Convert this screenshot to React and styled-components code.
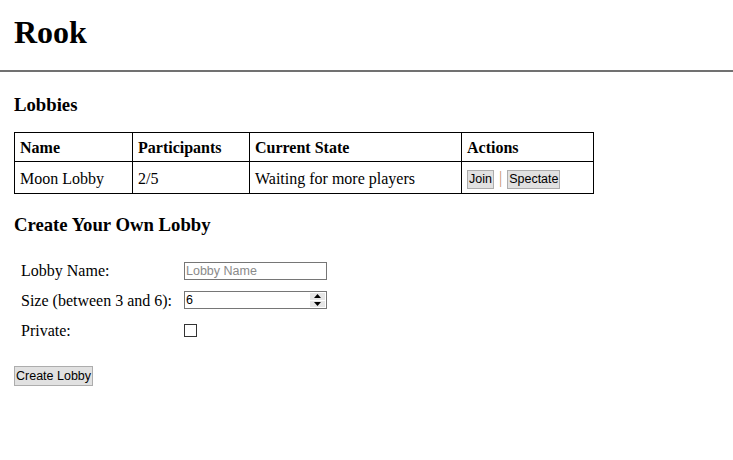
import React from "react";
import styled, { createGlobalStyle } from "styled-components";

const GlobalStyle = createGlobalStyle`
  html, body {
    margin: 0;
    padding: 0;
    background: #ffffff;
  }
  body {
    font-family: "Liberation Serif", "Times New Roman", serif;
    font-size: 16px;
    color: #000000;
  }
`;

// Header
const Header = styled.header`
  padding: 14px 14px 20px;
`;
const Title = styled.h1`
  margin: 0;
  font-size: 32px;
  line-height: 36px;
  font-weight: bold;
`;
const Rule = styled.div`
  height: 2px;
  background: #717171;
`;

const Main = styled.main`
  padding: 0 14px;
`;
const SectionTitle = styled.h3`
  margin: ${(p) => p.$top}px 0 0;
  font-size: 18.72px;
  line-height: 22px;
  font-weight: bold;
`;

// Lobby table
const Table = styled.table`
  margin-top: 16px;
  width: 579px;
  border-collapse: collapse;
  table-layout: fixed;
  font-size: 16px;
`;
const Th = styled.th`
  width: ${(p) => p.$width}px;
  border: 1px solid #000;
  padding: 6px 5px 4px;
  text-align: left;
  line-height: 18px;
  font-weight: bold;
`;
const Td = styled.td`
  border: 1px solid #000;
  padding: 6px 5px 4px;
  line-height: 18px;
  height: 21px;
  vertical-align: middle;
`;
const SmallButton = styled.button`
  font-family: "Liberation Sans", Arial, sans-serif;
  font-size: 12.5px;
  line-height: 15px;
  padding: 1px 1px;
  margin: 0;
  color: #000;
  background: #e1e1e1;
  border: 1px solid #adadad;
  border-radius: 0;
  vertical-align: baseline;
`;
const Divider = styled.span`
  color: #c4926a;
  margin: 0 1px;
`;

// Create form
const Form = styled.div`
  margin-top: 19px;
  padding-left: 7px;
  display: grid;
  grid-template-columns: 163px auto;
  grid-auto-rows: 30px;
  align-items: center;
`;
const Label = styled.span`
  line-height: 18px;
  padding-top: 2px;
`;
const TextInput = styled.input`
  box-sizing: border-box;
  width: 143px;
  height: 18px;
  margin: 0;
  padding: 0 1px;
  border: 1px solid #767676;
  font-family: "Liberation Sans", Arial, sans-serif;
  font-size: 12.5px;
  color: #000;
  outline: none;
  &::placeholder {
    color: #8a8a8a;
  }
`;
const NumberBox = styled.div`
  box-sizing: border-box;
  width: 143px;
  height: 18px;
  display: flex;
  border: 1px solid #767676;
  background: #fff;
`;
const NumberField = styled.input`
  flex: 1;
  min-width: 0;
  margin: 0;
  padding: 0 1px;
  border: none;
  font-family: "Liberation Sans", Arial, sans-serif;
  font-size: 12.5px;
  color: #000;
  outline: none;
`;
const Spinner = styled.div`
  width: 15px;
  display: flex;
  flex-direction: column;
  gap: 1px;
  padding: 1px 1px 1px 0;
`;
const SpinHalf = styled.div`
  flex: 1;
  background: #e6e6e6;
  display: flex;
  align-items: center;
  justify-content: center;
`;
const Check = styled.span`
  display: block;
  box-sizing: border-box;
  width: 13px;
  height: 13px;
  border: 1px solid #333;
  background: #fff;
`;
const CreateButton = styled(SmallButton)`
  display: block;
  margin-top: 21px;
  height: 20px;
`;

const Arrow = ({ up }) => (
  <svg width="7" height="4" viewBox="0 0 7 4">
    <path d={up ? "M0 4 L3.5 0 L7 4 Z" : "M0 0 L3.5 4 L7 0 Z"} fill="#000" />
  </svg>
);

const lobbies = [
  { name: "Moon Lobby", participants: "2/5", state: "Waiting for more players" },
];

export default function App() {
  return (
    <>
      <GlobalStyle />
      <Header>
        <Title>Rook</Title>
      </Header>
      <Rule />
      <Main>
        <SectionTitle $top={22}>Lobbies</SectionTitle>
        <Table>
          <thead>
            <tr>
              <Th $width={107}>Name</Th>
              <Th $width={106}>Participants</Th>
              <Th $width={201}>Current State</Th>
              <Th $width={121}>Actions</Th>
            </tr>
          </thead>
          <tbody>
            {lobbies.map((l, i) => (
              <tr key={i}>
                <Td>{l.name}</Td>
                <Td>{l.participants}</Td>
                <Td>{l.state}</Td>
                <Td>
                  <SmallButton>Join</SmallButton> <Divider>|</Divider>{" "}
                  <SmallButton>Spectate</SmallButton>
                </Td>
              </tr>
            ))}
          </tbody>
        </Table>

        <SectionTitle $top={20}>Create Your Own Lobby</SectionTitle>
        <Form>
          <Label>Lobby Name:</Label>
          <div>
            <TextInput placeholder="Lobby Name" />
          </div>
          <Label>Size (between 3 and 6):</Label>
          <NumberBox>
            <NumberField defaultValue="6" />
            <Spinner>
              <SpinHalf>
                <Arrow up />
              </SpinHalf>
              <SpinHalf>
                <Arrow />
              </SpinHalf>
            </Spinner>
          </NumberBox>
          <Label>Private:</Label>
          <div>
            <Check />
          </div>
        </Form>
        <CreateButton>Create Lobby</CreateButton>
      </Main>
    </>
  );
}
